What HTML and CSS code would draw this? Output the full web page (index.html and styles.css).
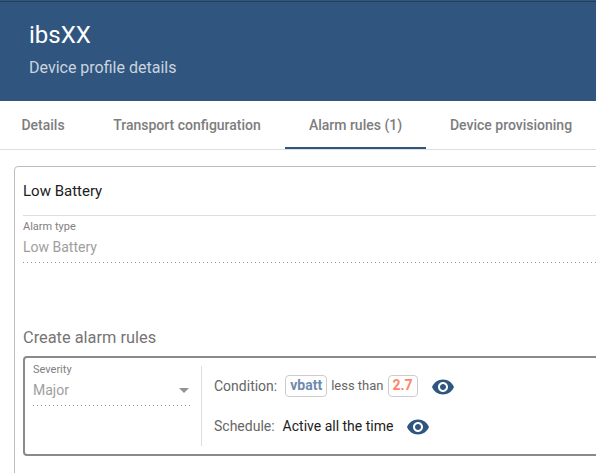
FILE: index.html
```html
<!DOCTYPE html>
<html lang="en">
<head>
<meta charset="utf-8">
<title>Device profile details</title>
<link rel="stylesheet" href="styles.css">
</head>
<body>
<header class="header">
  <h1 class="title"><span>ibsXX</span></h1>
  <p class="subtitle"><span>Device profile details</span></p>
</header>
<nav class="tabs">
  <a class="tab tab-details">Details</a>
  <a class="tab tab-transport">Transport configuration</a>
  <a class="tab tab-alarm active">Alarm rules (1)</a>
  <a class="tab tab-provisioning">Device provisioning</a>
</nav>
<main class="card">
  <h2 class="card-title">Low Battery</h2>
  <section class="field">
    <label class="label">Alarm type</label>
    <div class="value">Low Battery</div>
    <div class="dots"></div>
  </section>
  <h3 class="section-title">Create alarm rules</h3>
  <section class="rule">
    <div class="severity">
      <label class="label">Severity</label>
      <div class="value select">Major<i class="arrow"></i></div>
      <div class="dots"></div>
    </div>
    <div class="details">
      <div class="row">
        <span class="name">Condition:</span>
        <b class="chip key">vbatt</b>
        <span class="operation">less than</span>
        <b class="chip number">2.7</b>
        <svg class="eye" viewBox="0 0 24 24"><path d="M12 4.5C7 4.5 2.73 7.61 1 12c1.73 4.39 6 7.5 11 7.5s9.27-3.11 11-7.5c-1.73-4.39-6-7.5-11-7.5zM12 17c-2.76 0-5-2.240-5-5s2.240-5 5-5 5 2.240 5 5-2.240 5-5 5zm0-8c-1.660 0-3 1.340-3 3s1.340 3 3 3 3-1.340 3-3-1.340-3-3-3z"/></svg>
      </div>
      <div class="row">
        <span class="name">Schedule:</span>
        <span class="schedule">Active all the time</span>
        <svg class="eye" viewBox="0 0 24 24"><path d="M12 4.5C7 4.5 2.73 7.61 1 12c1.73 4.39 6 7.5 11 7.5s9.27-3.11 11-7.5c-1.73-4.39-6-7.5-11-7.5zM12 17c-2.76 0-5-2.240-5-5s2.240-5 5-5 5 2.240 5 5-2.240 5-5 5zm0-8c-1.660 0-3 1.340-3 3s1.340 3 3 3 3-1.340 3-3-1.340-3-3-3z"/></svg>
      </div>
    </div>
  </section>
</main>
</body>
</html>
```
FILE: styles.css
```css
* { box-sizing: border-box; }
body { margin: 0; height: 473px; overflow: hidden; background: #fff; font: 14px/20px Roboto, sans-serif; color: #212121; }
h1, h2, h3, p { margin: 0; font-weight: 400; }
.header { height: 101px; padding: 19px 29px 0; background: linear-gradient(#305680 0 1px, #213f5c 1px 2px, #305680 2px); color: #fff; }
.title { font-size: 24px; line-height: 32px; }
.subtitle { margin-top: 7px; font-size: 16px; line-height: 20px; color: rgba(255,255,255,.75); }
.tabs { display: flex; height: 49px; border-bottom: 1px solid #ddd; }
.tab { flex: none; height: 48px; text-align: center; font-weight: 500; line-height: 48px; color: #7d7d7d; white-space: nowrap; }
.tab-details { width: 86px; }
.tab-transport { width: 199px; padding-right: 1px; padding-left: 4px; }
.tab-alarm { width: 141px; }
.tab-provisioning { width: 170px; }
.active { border-bottom: 2px solid #305680; }
.card { width: 700px; height: 400px; margin: 16px 0 0 14px; padding: 0 8px; border: 1px solid #bdbdbd; border-radius: 4px; }
.card-title { height: 49px; border-bottom: 1px solid #dedede; font-size: 15px; line-height: 48px; }
.field { height: 112px; padding-top: 3px; }
.label { display: block; font-size: 11px; line-height: 16px; color: #808080; }
.value { height: 24px; line-height: 24px; color: #9e9e9e; }
.dots { height: 1px; margin-top: 3px; background: repeating-linear-gradient(90deg, #949494 0 1px, transparent 1px 4px); }
.section-title { height: 28px; line-height: 20px; color: #757575; }
.rule { display: flex; height: 100px; border: 2px solid #8a8a8a; border-radius: 4px; padding: 8px; }
.severity { width: 158px; margin-top: -4px; }
.select { display: flex; justify-content: space-between; align-items: center; }
.arrow { margin-right: 2px; border: 5px solid transparent; border-top-color: #949494; border-bottom: 0; }
.details { display: flex; flex-direction: column; height: 80px; margin-left: 10px; padding-left: 12px; border-left: 1px solid #dedede; }
.row { display: flex; align-items: center; height: 40px; white-space: nowrap; }
.name { color: #666; }
.chip { height: 22px; padding: 0 4px; border: 1px solid #ccc; border-radius: 4px; line-height: 19px; }
.key { margin-left: 8px; color: #6e8bad; }
.operation { margin: 0 4px; font-size: 13px; color: #666; }
.number { color: #ff8566; }
.schedule { margin-left: 8px; }
.eye { width: 24px; height: 24px; margin: 2px 0 0 13px; fill: #305680; }
```
